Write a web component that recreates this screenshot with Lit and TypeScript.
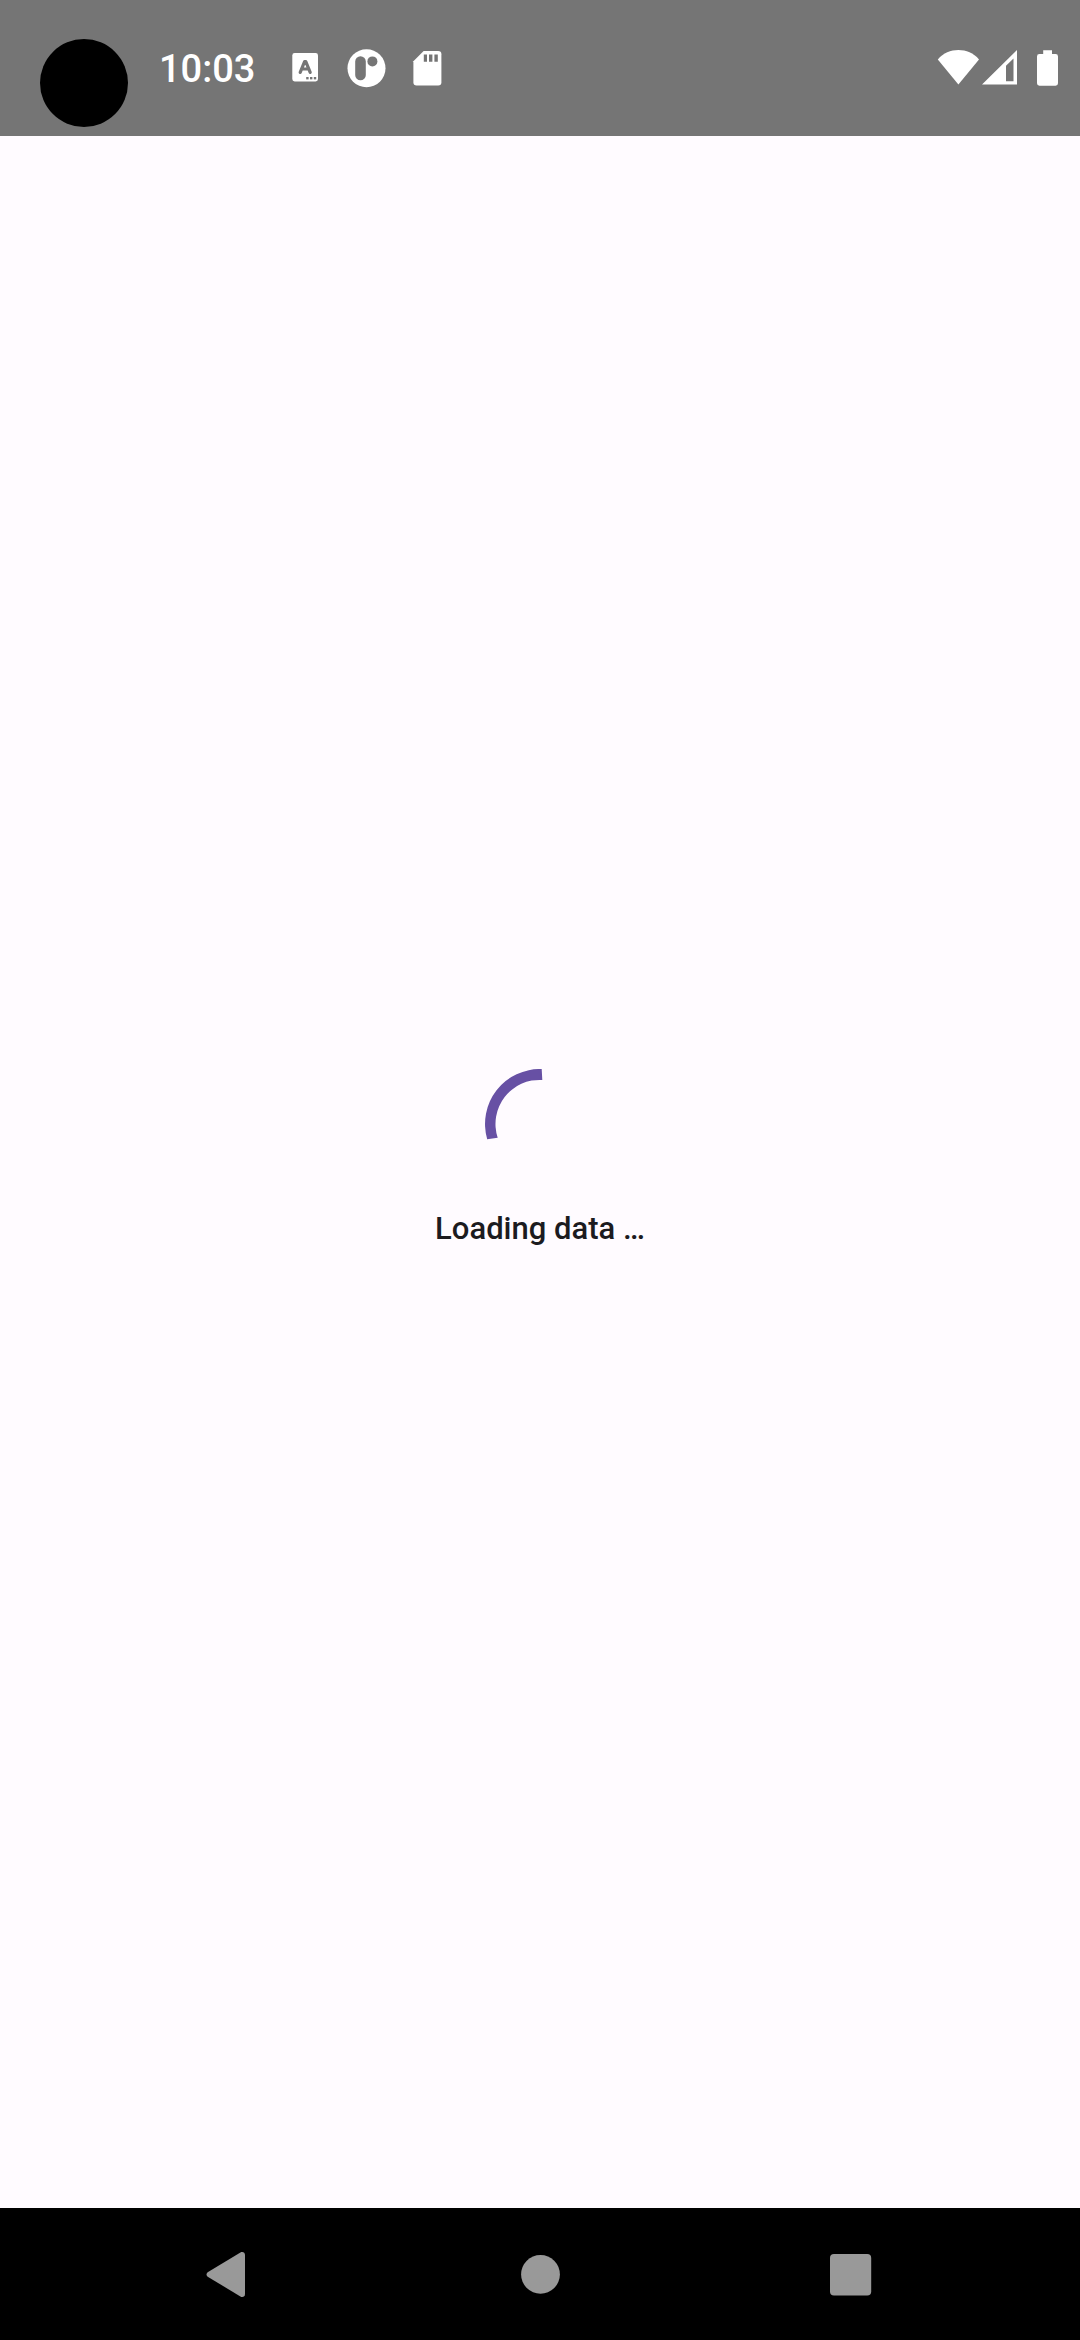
import { LitElement, html, css } from "lit";
import { customElement } from "lit/decorators.js";

@customElement("status-bar")
class StatusBar extends LitElement {
  static styles = css`
    :host {
      display: block;
    }
    .bar {
      position: relative;
      display: flex;
      align-items: center;
      justify-content: space-between;
      height: 136px;
      padding: 0 12px 0 159px;
      background: #757575;
      color: #fff;
      box-sizing: border-box;
    }
    .camera {
      position: absolute;
      left: 40px;
      top: 39px;
      width: 88px;
      height: 88px;
      border-radius: 50%;
      background: #000;
    }
    .left {
      display: flex;
      align-items: center;
      gap: 30px;
    }
    .time {
      padding-top: 2px;
      font: 500 38px/46px Roboto, sans-serif;
    }
    .notices {
      display: flex;
      gap: 21px;
    }
    .system {
      display: flex;
    }
    svg {
      display: block;
      fill: #fff;
    }
    .hole {
      fill: #757575;
    }
    .letter {
      fill: none;
      stroke: #757575;
      stroke-width: 3.2;
      stroke-linecap: round;
      stroke-linejoin: round;
    }
  `;

  render() {
    return html`
      <header class="bar">
        <div class="camera"></div>
        <div class="left">
          <time class="time">10:03</time>
          <div class="notices">
            <svg width="40" height="40" viewBox="0 0 40 40" aria-hidden="true">
              <rect x="7.3" y="5" width="25.7" height="28.5" rx="2.4" />
              <path class="letter" d="M15.2 24.4L19.6 13.6H20.8L25.2 24.4M17 21H23.4" />
              <rect class="hole" x="21.2" y="29" width="2.4" height="2.4" />
              <rect class="hole" x="25" y="29" width="2.4" height="2.4" />
              <rect class="hole" x="28.8" y="29" width="2.4" height="2.4" />
            </svg>
            <svg width="40" height="40" viewBox="0 0 40 40" aria-hidden="true">
              <circle cx="20.5" cy="20.2" r="19" />
              <rect class="hole" x="9.2" y="8.3" width="10.6" height="24" rx="5.3" />
              <circle class="hole" cx="26.4" cy="13.4" r="5" />
            </svg>
            <svg width="40" height="40" viewBox="0 0 40 40" aria-hidden="true">
              <path d="M16.6 3.1H31.2A3.2 3.2 0 0 1 34.4 6.3V34.3A3.2 3.2 0 0 1 31.2 37.5H9.6A3.2 3.2 0 0 1 6.4 34.3V13.3Z" />
              <path class="hole" d="M16.8 6.6H20V13.8H16.8ZM22 6.6H25.4V13.8H22ZM27.4 6.6H30.8V13.8H27.4Z" />
            </svg>
          </div>
        </div>
        <div class="system">
          <svg width="44" height="40" viewBox="0 0 44 40" aria-hidden="true">
            <path d="M22.4 36.4L1.8 11.4C7.4 5 14.6 2.1 22.4 2.1S37.4 5 43 11.4Z" />
          </svg>
          <svg width="44" height="40" viewBox="0 0 44 40" aria-hidden="true">
            <path fill-rule="evenodd" d="M2 36.6L37 2V36.6ZM26 17.8V33.2H33.5V10.5Z" />
          </svg>
          <svg width="44" height="40" viewBox="0 0 44 40" aria-hidden="true">
            <path d="M19.2 2.2H28V6H31.6A2.4 2.4 0 0 1 34 8.4V35.3A2.4 2.4 0 0 1 31.6 37.7H15.4A2.4 2.4 0 0 1 13 35.3V8.4A2.4 2.4 0 0 1 15.4 6H19.2Z" />
          </svg>
        </div>
      </header>
    `;
  }
}

@customElement("loading-view")
class LoadingView extends LitElement {
  static styles = css`
    :host {
      display: flex;
      flex: 1;
    }
    .view {
      display: flex;
      flex: 1;
      flex-direction: column;
      align-items: center;
      justify-content: center;
    }
    .spinner {
      display: block;
      fill: #6750a4;
    }
    .label {
      margin: 0;
      padding: 28px 0 24px;
      color: #1c1b1f;
      font: 500 31px/44px Roboto, sans-serif;
    }
  `;

  render() {
    return html`
      <main class="view" role="status">
        <svg class="spinner" width="110" height="110" viewBox="0 0 110 110" aria-hidden="true">
          <path d="M2.2 70.3A55 55 0 0 1 56.7 0L57.3 11A44 44 0 0 0 12.7 68.7Z" />
        </svg>
        <p class="label">Loading data …</p>
      </main>
    `;
  }
}

@customElement("navigation-bar")
class NavigationBar extends LitElement {
  static styles = css`
    :host {
      display: block;
    }
    .bar {
      display: flex;
      height: 132px;
      padding: 0 75px;
      background: #000;
      box-sizing: border-box;
    }
    .key {
      display: flex;
      flex: 1;
      align-items: center;
      justify-content: center;
      padding: 0;
      border: 0;
      background: none;
    }
    svg {
      display: block;
      fill: #999;
    }
  `;

  render() {
    return html`
      <nav class="bar">
        <button class="key" type="button" aria-label="Back">
          <svg width="48" height="48" viewBox="0 0 48 48">
            <path d="M2.1 22.1L34.4 2.6C36.6 1.4 39 2.4 39 5V44C39 46.6 36.6 47.6 34.4 46.4L2.1 27C0 25.7 0 23.4 2.1 22.1Z" />
          </svg>
        </button>
        <button class="key" type="button" aria-label="Home">
          <svg width="48" height="48" viewBox="0 0 48 48">
            <circle cx="24.5" cy="24.4" r="19.4" />
          </svg>
        </button>
        <button class="key" type="button" aria-label="Recent apps">
          <svg width="48" height="48" viewBox="0 0 48 48">
            <rect x="4" y="4" width="41.2" height="41.4" rx="4" />
          </svg>
        </button>
      </nav>
    `;
  }
}

@customElement("app-root")
class AppRoot extends LitElement {
  static styles = css`
    :host {
      display: flex;
      flex-direction: column;
      min-height: 100vh;
      background: #fffbff;
    }
  `;

  render() {
    return html`
      <status-bar></status-bar>
      <loading-view></loading-view>
      <navigation-bar></navigation-bar>
    `;
  }
}
